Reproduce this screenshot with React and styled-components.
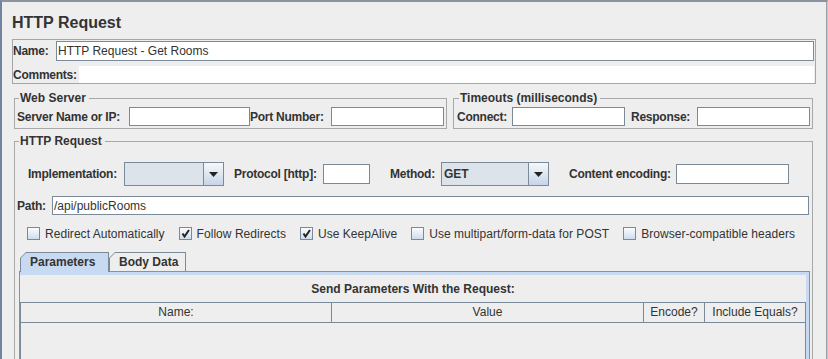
import React from 'react';
import styled, { createGlobalStyle } from 'styled-components';

const GlobalStyle = createGlobalStyle`
  html, body {
    margin: 0;
    padding: 0;
    background: #eeeeee;
  }
  body {
    font-family: "Liberation Sans", Arial, sans-serif;
    font-size: 12px;
    color: #333333;
  }
`;

const SLATE = '#7a8a99';
const LIGHT_BLUE = '#c8daf2';

const Window = styled.div`
  width: 828px;
  height: 359px;
  overflow: hidden;
  box-sizing: border-box;
  border-left: 2px solid #7283a0;
  border-top: 2px solid #8a939e;
  border-right: 1px solid #b6cbe8;
  background: #eeeeee;
`;

const Page = styled.div`
  box-sizing: border-box;
  height: 100%;
  padding: 11px 0 0 10px;
  border-right: 1px solid #a0a0a0;
`;

const Title = styled.h1`
  margin: 0 0 6px 0;
  font-size: 16px;
  line-height: 20px;
  font-weight: bold;
  color: #333333;
`;

const NamePanel = styled.div`
  box-sizing: border-box;
  width: 804px;
  border: 1px solid #a6a6a6;
  padding: 1px 1px 0 0;
  display: flex;
  flex-direction: column;
  gap: 5px;
`;

const Row = styled.div`
  display: flex;
  align-items: center;
  height: ${p => p.$h}px;
  margin-top: ${p => p.$mt || 0}px;
  padding-left: ${p => p.$pl || 0}px;
`;

const Label = styled.span`
  flex: 0 0 auto;
  box-sizing: border-box;
  width: ${p => p.$w}px;
  padding-left: ${p => p.$pl || 0}px;
  font-weight: bold;
  letter-spacing: -0.25px;
  white-space: nowrap;
`;

const Field = styled.input`
  box-sizing: border-box;
  height: ${p => p.$h || 19}px;
  width: ${p => (p.$w ? `${p.$w}px` : 'auto')};
  flex: ${p => (p.$w ? '0 0 auto' : '1 1 0')};
  min-width: 0;
  margin: 0;
  padding: 0 1px;
  border: 1px solid ${p => (p.$bare ? 'transparent' : SLATE)};
  background: #ffffff;
  font: 12px "Liberation Sans", Arial, sans-serif;
  color: #333333;
  outline: none;
`;

const GroupRow = styled.div`
  display: flex;
  gap: 6px;
  margin-top: 7px;
  padding-left: 2px;
`;

const Group = styled.fieldset`
  box-sizing: border-box;
  margin: ${p => (p.$mt ? `${p.$mt}px 0 0 2px` : '0')};
  width: ${p => p.$w}px;
  min-width: 0;
  height: ${p => (p.$h ? `${p.$h}px` : 'auto')};
  padding: ${p => p.$pad};
  border: 1px solid #a8a8a8;
`;

const Legend = styled.legend`
  margin-left: 2px;
  padding: 0 3px 0 1px;
  font-weight: bold;
  font-size: 12px;
  line-height: 14px;
`;

const Combo = styled.div`
  flex: 0 0 auto;
  box-sizing: border-box;
  display: flex;
  width: ${p => p.$w}px;
  height: 24px;
  border: 1px solid ${SLATE};
  background: #dde3eb;
`;

const ComboValue = styled.div`
  flex: 1;
  display: flex;
  align-items: center;
  padding-left: 2px;
  font-weight: bold;
`;

const ComboButton = styled.div`
  width: 19px;
  border-left: 1px solid ${SLATE};
  background: linear-gradient(#f5f8fb, #c6d5e7);
  display: flex;
  align-items: center;
  justify-content: center;
`;

const CheckRow = styled.div`
  display: flex;
  align-items: center;
  height: 13px;
  margin-top: 12px;
  padding-left: 10px;
  gap: 14px;
`;

const CheckItem = styled.label`
  display: flex;
  align-items: center;
  gap: 5px;
  letter-spacing: 0.04px;
  white-space: nowrap;
`;

const Box = styled.span`
  box-sizing: border-box;
  width: 13px;
  height: 13px;
  border: 1px solid ${SLATE};
  background: linear-gradient(#fbfcfe, #cfdcec);
  display: flex;
  align-items: center;
  justify-content: center;
`;

const TabStrip = styled.div`
  display: flex;
  align-items: flex-end;
  margin: 12px 0 0 3px;
  position: relative;
  z-index: 1;
`;

const Tab = styled.div`
  position: relative;
  box-sizing: border-box;
  width: ${p => p.$w}px;
  height: ${p => (p.$active ? 20 : 19)}px;
  margin-bottom: ${p => (p.$active ? -1 : 0)}px;
  padding: 3px 0 0 10px;
  background: ${SLATE};
  clip-path: polygon(0 6px, 6px 0, 100% 0, 100% 100%, 0 100%);
  font-weight: bold;
  line-height: 14px;

  &::before {
    content: '';
    position: absolute;
    inset: 1px 1px ${p => (p.$active ? 0 : -1)}px 1px;
    background: ${p => (p.$active ? LIGHT_BLUE : '#eeeeee')};
    clip-path: polygon(0 5px, 5px 0, 100% 0, 100% 100%, 0 100%);
  }

  span {
    position: relative;
  }
`;

const TabPanel = styled.div`
  box-sizing: border-box;
  margin-left: 2px;
  width: 791px;
  border: 1px solid #7f93ae;
  background: ${LIGHT_BLUE};
  padding: 3px 3px 0 0;
  height: 120px;
`;

const TabBody = styled.div`
  background: #eeeeee;
  height: 100%;
`;

const Caption = styled.div`
  padding: 7px 0 6px;
  line-height: 14px;
  text-align: center;
  font-weight: bold;
`;

const ScrollPane = styled.div`
  border: 1px solid ${SLATE};
  border-bottom: none;
  height: 100px;
`;

const HeaderRow = styled.div`
  display: flex;
  height: 19px;
  border-bottom: 1px solid ${SLATE};
`;

const HeaderCell = styled.div`
  box-sizing: border-box;
  flex: ${p => (p.$w ? `0 0 ${p.$w}px` : '1 1 0')};
  border-right: ${p => (p.$w ? `1px solid ${SLATE}` : 'none')};
  text-align: center;
  line-height: 18px;
  white-space: nowrap;
`;

const Arrow = () => (
  <svg width="9" height="5" viewBox="0 0 9 5">
    <polygon points="0,0 9,0 4.5,5" fill="#222" />
  </svg>
);

const Check = ({ checked, children }) => (
  <CheckItem>
    <Box>
      {checked && (
        <svg width="9" height="9" viewBox="0 0 9 9">
          <polyline points="1.5,4.5 3.5,7.5 8,1" fill="none" stroke="#222" strokeWidth="2" />
        </svg>
      )}
    </Box>
    {children}
  </CheckItem>
);

export default function App() {
  return (
    <>
      <GlobalStyle />
      <Window>
        <Page>
          <Title>HTTP Request</Title>

          <NamePanel>
            <Row $h={20}>
              <Label $w={43}>Name:</Label>
              <Field $h={20} readOnly value="HTTP Request - Get Rooms" />
            </Row>
            <Row $h={17}>
              <Label $w={66}>Comments:</Label>
              <Field $h={17} $bare readOnly value="" />
            </Row>
          </NamePanel>

          <GroupRow>
            <Group $w={433} $pad="2px 2px 2px 2px">
              <Legend>Web Server</Legend>
              <Row $h={19}>
                <Label $w={112}>Server Name or IP:</Label>
                <Field $w={121} readOnly value="" />
                <Label $w={81}>Port Number:</Label>
                <Field readOnly value="" />
              </Row>
            </Group>
            <Group $w={360} $pad="2px 2px 2px 3px">
              <Legend>Timeouts (milliseconds)</Legend>
              <Row $h={19}>
                <Label $w={55}>Connect:</Label>
                <Field $w={113} readOnly value="" />
                <Label $w={72} $pl={6}>Response:</Label>
                <Field readOnly value="" />
              </Row>
            </Group>
          </GroupRow>

          <Group $mt={5} $w={799} $h={260} $pad="14px 3px 0 2px">
            <Legend>HTTP Request</Legend>
            <Row $h={24} $pl={11}>
              <Label $w={96}>Implementation:</Label>
              <Combo $w={100}>
                <ComboValue />
                <ComboButton>
                  <Arrow />
                </ComboButton>
              </Combo>
              <Label $w={99} $pl={10}>Protocol [http]:</Label>
              <Field $w={47} $h={20} readOnly value="" />
              <Label $w={71} $pl={20}>Method:</Label>
              <Combo $w={108}>
                <ComboValue>GET</ComboValue>
                <ComboButton>
                  <Arrow />
                </ComboButton>
              </Combo>
              <Label $w={127} $pl={20}>Content encoding:</Label>
              <Field $w={113} $h={20} readOnly value="" />
            </Row>

            <Row $h={19} $mt={10}>
              <Label $w={35}>Path:</Label>
              <Field readOnly value="/api/publicRooms" />
            </Row>

            <CheckRow>
              <Check>Redirect Automatically</Check>
              <Check checked>Follow Redirects</Check>
              <Check checked>Use KeepAlive</Check>
              <Check>Use multipart/form-data for POST</Check>
              <Check>Browser-compatible headers</Check>
            </CheckRow>

            <TabStrip>
              <Tab $w={89} $active>
                <span>Parameters</span>
              </Tab>
              <Tab $w={77}>
                <span>Body Data</span>
              </Tab>
            </TabStrip>
            <TabPanel>
              <TabBody>
                <Caption>Send Parameters With the Request:</Caption>
                <ScrollPane>
                  <HeaderRow>
                    <HeaderCell $w={311}>Name:</HeaderCell>
                    <HeaderCell $w={312}>Value</HeaderCell>
                    <HeaderCell $w={61}>Encode?</HeaderCell>
                    <HeaderCell>Include Equals?</HeaderCell>
                  </HeaderRow>
                </ScrollPane>
              </TabBody>
            </TabPanel>
          </Group>
        </Page>
      </Window>
    </>
  );
}
